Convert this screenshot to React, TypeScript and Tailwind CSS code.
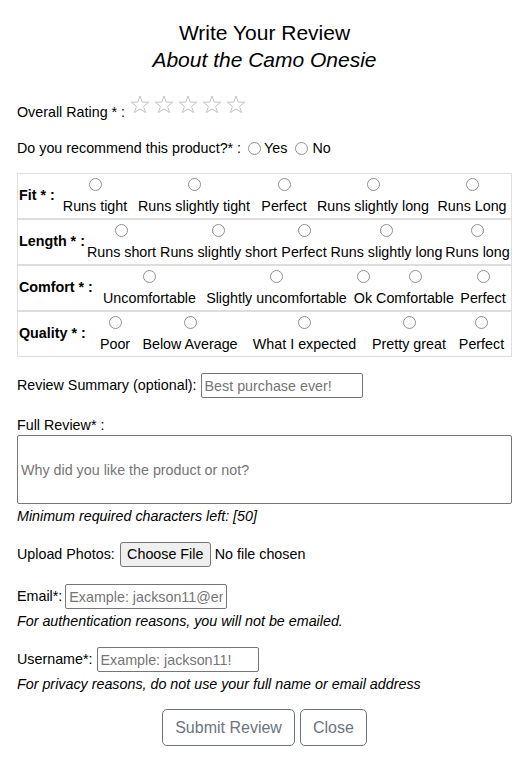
import React from "react";

type Opt = { t: string; w: string };
type Row = { label: string; lw: string; opts: Opt[] };

const rows: Row[] = [
  {
    label: "Fit * :",
    lw: "w-[40px]",
    opts: [
      { t: "Runs tight", w: "w-[74px]" },
      { t: "Runs slightly tight", w: "w-[124px]" },
      { t: "Perfect", w: "w-[56px]" },
      { t: "Runs slightly long", w: "w-[122px]" },
      { t: "Runs Long", w: "w-[76px]" },
    ],
  },
  {
    label: "Length * :",
    lw: "w-[68px]",
    opts: [
      { t: "Runs short", w: "w-[71px]" },
      { t: "Runs slightly short", w: "w-[123px]" },
      { t: "Perfect", w: "w-[48px]" },
      { t: "Runs slightly long", w: "w-[117px]" },
      { t: "Runs long", w: "w-[65px]" },
    ],
  },
  {
    label: "Comfort * :",
    lw: "w-[80px]",
    opts: [
      { t: "Uncomfortable", w: "w-[103px]" },
      { t: "Slightly uncomfortable", w: "w-[151px]" },
      { t: "Ok", w: "w-[22px]" },
      { t: "Comfortable", w: "w-[82px]" },
      { t: "Perfect", w: "w-[54px]" },
    ],
  },
  {
    label: "Quality * :",
    lw: "w-[76px]",
    opts: [
      { t: "Poor", w: "w-[42px]" },
      { t: "Below Average", w: "w-[108px]" },
      { t: "What I expected", w: "w-[121px]" },
      { t: "Pretty great", w: "w-[88px]" },
      { t: "Perfect", w: "w-[57px]" },
    ],
  },
];

function Radio() {
  return (
    <span className="block w-[13px] h-[13px] rounded-full border border-[#8f8f8f] bg-white shrink-0" />
  );
}

function Star() {
  return (
    <svg width="20" height="19" viewBox="0 0 20 19" className="shrink-0">
      <polygon
        points="10,1 12.3,7.2 18.8,7.2 13.6,11.2 15.5,17.6 10,13.8 4.5,17.6 6.4,11.2 1.2,7.2 7.7,7.2"
        fill="none"
        stroke="#c4c4c4"
        strokeWidth="1"
        strokeLinejoin="round"
      />
    </svg>
  );
}

export default function App() {
  return (
    <div className="min-h-screen bg-white text-black px-[17px] text-[14.3px] font-['Liberation_Sans',Arial,Helvetica,sans-serif]">
      <div className="pt-[19px] text-center text-[21px] leading-[27px]">
        <div>Write Your Review</div>
        <div className="italic">About the Camo Onesie</div>
      </div>

      <div className="mt-[22px] flex items-start h-[27px]">
        <span className="mt-[7px] leading-[20px]">Overall Rating * :</span>
        <div className="ml-[5px] flex gap-[4px]">
          <Star />
          <Star />
          <Star />
          <Star />
          <Star />
        </div>
      </div>

      <div className="mt-[16px] flex items-center h-[20px] leading-[20px]">
        <span>Do you recommend this product?* :</span>
        <span className="ml-[7px]">
          <Radio />
        </span>
        <span className="ml-[3px]">Yes</span>
        <span className="ml-[8px]">
          <Radio />
        </span>
        <span className="ml-[4px]">No</span>
      </div>

      <div className="mt-[15px]">
        {rows.map((r) => (
          <div key={r.label} className="flex h-[46px] border border-[#dedede]">
            <div className={`${r.lw} shrink-0 flex items-center pl-[1px] font-bold whitespace-nowrap`}>
              {r.label}
            </div>
            {r.opts.map((o) => (
              <div key={o.t} className={`${o.w} shrink-0 flex flex-col items-center pt-[4px]`}>
                <Radio />
                <span className="mt-[5px] leading-[20px] whitespace-nowrap">{o.t}</span>
              </div>
            ))}
          </div>
        ))}
      </div>

      <div className="mt-[16px] flex items-center h-[25px]">
        <span>Review Summary (optional):</span>
        <input
          className="ml-[4px] w-[162px] h-[25px] border border-[#767676] rounded-[2px] px-[3px] text-[14.3px] outline-none placeholder:text-[#757575]"
          placeholder="Best purchase ever!"
        />
      </div>

      <div className="mt-[17px] leading-[20px]">Full Review* :</div>
      <input
        className="block w-full h-[69px] border border-[#767676] rounded-[2px] px-[3px] text-[14.3px] outline-none placeholder:text-[#757575]"
        placeholder="Why did you like the product or not?"
      />
      <div className="mt-[2px] italic leading-[20px]">Minimum required characters left: [50]</div>

      <div className="mt-[16px] flex items-center h-[25px]">
        <span>Upload Photos:</span>
        <span className="ml-[5px] h-[25px] w-[91px] flex items-center justify-center bg-[#efefef] border border-[#767676] rounded-[3px]">
          Choose File
        </span>
        <span className="ml-[4px]">No file chosen</span>
      </div>

      <div className="mt-[17px] flex items-center h-[25px]">
        <span>Email*:</span>
        <input
          className="ml-[3px] w-[162px] h-[25px] border border-[#767676] rounded-[2px] px-[3px] text-[14.3px] outline-none placeholder:text-[#757575]"
          placeholder="Example: jackson11@email.com"
        />
      </div>
      <div className="mt-[2px] italic leading-[20px]">For authentication reasons, you will not be emailed.</div>

      <div className="mt-[16px] flex items-center h-[25px]">
        <span>Username*:</span>
        <input
          className="ml-[4px] w-[162px] h-[25px] border border-[#767676] rounded-[2px] px-[3px] text-[14.3px] outline-none placeholder:text-[#757575]"
          placeholder="Example: jackson11!"
        />
      </div>
      <div className="mt-[2px] italic leading-[20px]">For privacy reasons, do not use your full name or email address</div>

      <div className="mt-[15px] flex justify-center gap-[5px] pb-[15px]">
        <button className="h-[37px] px-[12px] text-[16px] text-[#6c757d] border border-[#6c757d] rounded-[5px] bg-white">
          Submit Review
        </button>
        <button className="h-[37px] px-[12px] text-[16px] text-[#6c757d] border border-[#6c757d] rounded-[5px] bg-white">
          Close
        </button>
      </div>
    </div>
  );
}
